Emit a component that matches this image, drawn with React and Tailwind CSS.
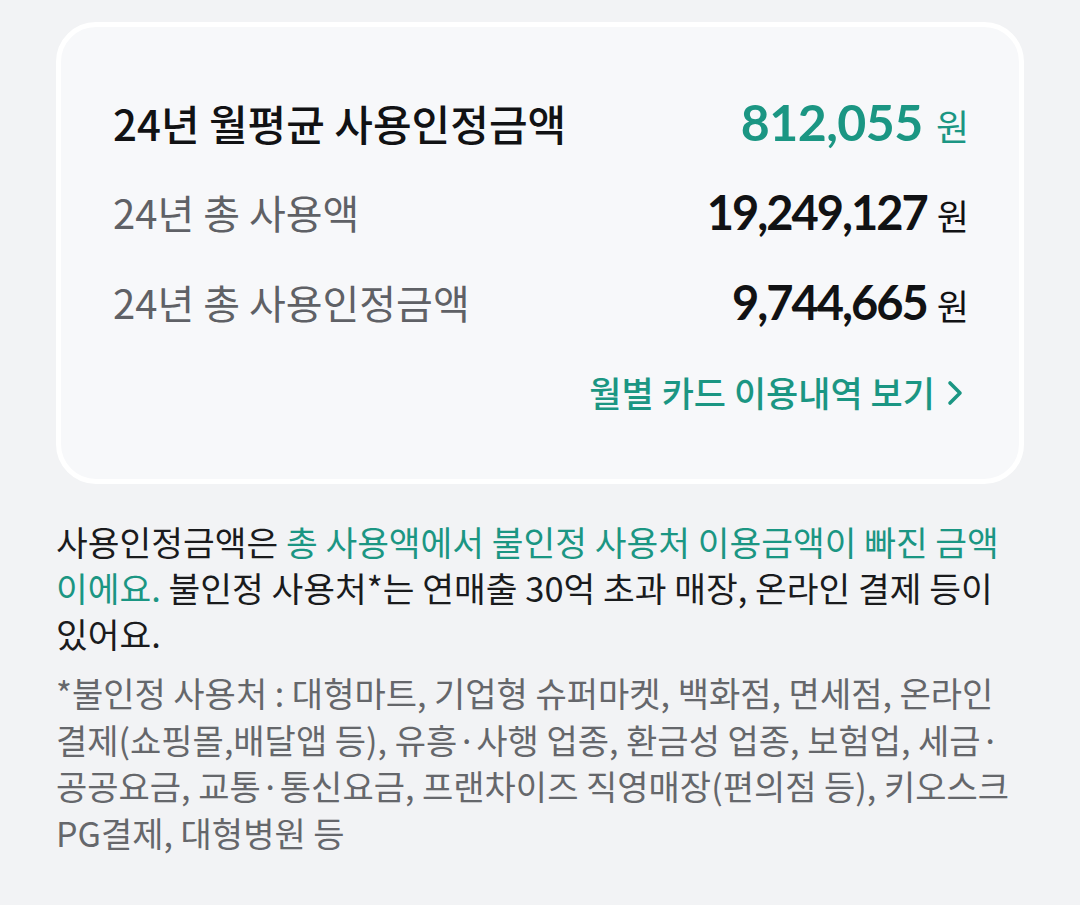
const KR = { fontFamily: '"Noto Sans CJK KR", "Noto Sans", sans-serif' }
const NUM = { fontFamily: 'Lato, "Noto Sans CJK KR", sans-serif' }

function Row({ label, amount, strong }) {
    return (
        <div className="flex items-center justify-between h-[90px]">
            <span
                className={strong ? 'text-[42px] font-medium text-[#111214]' : 'text-[40px] text-[#5f6166]'}
                style={KR}
            >
                {label}
            </span>
            <span className={strong ? 'flex items-baseline gap-[13px]' : 'flex items-baseline gap-[10px]'}>
                <span
                    className={strong ? 'text-[50px] font-bold text-[#1b9683] tracking-[-0.5px]' : 'text-[47px] font-bold text-[#111214] tracking-[-2px]'}
                    style={NUM}
                >
                    {amount}
                </span>
                <span className={strong ? 'text-[36px] text-[#1b9683]' : 'text-[35px] text-[#111214]'} style={KR}>
                    원
                </span>
            </span>
        </div>
    )
}

export default function App() {
    return (
        <div className="min-h-[905px] w-[1080px] bg-[#f2f3f5] pt-[22px] px-[56px]" style={KR}>
            <div className="w-[968px] rounded-[40px] border-[5px] border-white bg-[#f7f8fa] pt-[50px] pb-[42px] pl-[52px] pr-[50px]">
                <Row label="24년 월평균 사용인정금액" amount="812,055" strong />
                <Row label="24년 총 사용액" amount="19,249,127" />
                <Row label="24년 총 사용인정금액" amount="9,744,665" />
                <div className="flex items-center justify-end h-[90px] pr-[5px]">
                    <span className="text-[35px] font-medium text-[#1b9683]">월별 카드 이용내역 보기</span>
                    <svg width="17" height="26" viewBox="0 0 17 26" className="ml-[12px] mt-[2px]" fill="none">
                        <polyline points="3,3 13,13 3,23" stroke="#1b9683" strokeWidth="3.6" strokeLinecap="round" strokeLinejoin="round" />
                    </svg>
                </div>
            </div>

            <p className="mt-[34px] text-[34.5px] leading-[46px] text-[#1a1b1d]">
                사용인정금액은 <span className="text-[#1b9683]">총 사용액에서 불인정 사용처 이용금액이 빠진 금액</span>
                <br />
                <span className="text-[#1b9683]">이에요.</span> 불인정 사용처*는 연매출 30억 초과 매장, 온라인 결제 등이
                <br />
                있어요.
            </p>

            <p className="mt-[14px] text-[34px] leading-[46.5px] text-[#65676b]">
                *불인정 사용처 : 대형마트, 기업형 슈퍼마켓, 백화점, 면세점, 온라인
                <br />
                결제(쇼핑몰,배달앱 등), 유흥·사행 업종, 환금성 업종, 보험업, 세금·
                <br />
                공공요금, 교통·통신요금, 프랜차이즈 직영매장(편의점 등), 키오스크
                <br />
                PG결제, 대형병원 등
            </p>
        </div>
    )
}
